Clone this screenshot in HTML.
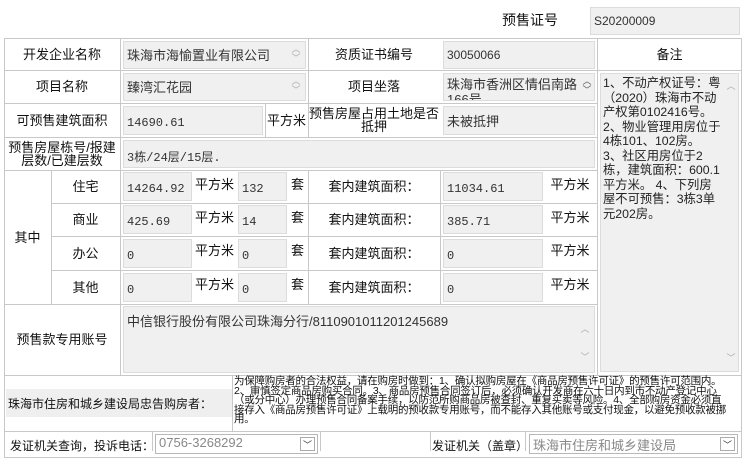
<!DOCTYPE html>
<html><head><meta charset="utf-8"><style>
body{margin:0;width:750px;height:450px;overflow:hidden;background:#fff;font-family:"Liberation Sans","Noto Sans CJK SC","WenQuanYi Zen Hei",sans-serif;font-size:13px;color:#111;position:relative}
div{position:absolute;box-sizing:border-box}
.h{background:#c8c8c8}
.v{background:#c8c8c8}
.in{background:#f0f0f0;border:1px solid #dcdcdc;color:#333;font-size:12px;padding-left:3px;display:flex;align-items:center}
.m{font-family:"Liberation Mono","Noto Sans CJK SC",monospace;padding-top:4px}
.lb{display:flex;align-items:center;justify-content:center;text-align:center;line-height:13px}
.sa{font-size:9px;color:#aaa;line-height:9px;text-align:center;width:10px}
</style></head><body>
<div class="lb" style="left:490px;top:8px;width:80px;height:24px;font-size:14px">预售证号</div>
<div class="in" style="left:590px;top:7px;width:150px;height:28px;font-family:'Liberation Sans',sans-serif">S20200009</div>

<div style="left:4px;top:38px;width:738px;height:420px;border:1px solid #c8c8c8"></div>
<div class="h" style="left:4px;top:70px;width:593px;height:1px"></div>
<div class="h" style="left:4px;top:103px;width:593px;height:1px"></div>
<div class="h" style="left:4px;top:137px;width:593px;height:1px"></div>
<div class="h" style="left:4px;top:170px;width:593px;height:1px"></div>
<div class="h" style="left:51px;top:203px;width:546px;height:1px"></div>
<div class="h" style="left:51px;top:236px;width:546px;height:1px"></div>
<div class="h" style="left:51px;top:270px;width:546px;height:1px"></div>
<div class="h" style="left:4px;top:304px;width:593px;height:1px"></div>
<div class="h" style="left:4px;top:375px;width:738px;height:1px"></div>
<div class="h" style="left:4px;top:431px;width:738px;height:1px"></div>
<div class="h" style="left:597px;top:70px;width:145px;height:1px"></div>
<div class="v" style="left:120px;top:38px;width:1px;height:337px"></div>
<div class="v" style="left:51px;top:170px;width:1px;height:134px"></div>
<div class="v" style="left:308px;top:38px;width:1px;height:99px"></div>
<div class="v" style="left:308px;top:170px;width:1px;height:134px"></div>
<div class="v" style="left:265px;top:103px;width:1px;height:34px"></div>
<div class="v" style="left:440px;top:170px;width:1px;height:134px"></div>
<div class="v" style="left:597px;top:38px;width:1px;height:337px"></div>
<div class="v" style="left:232px;top:375px;width:1px;height:56px"></div>
<div class="v" style="left:152px;top:431px;width:1px;height:20px"></div>
<div class="v" style="left:320px;top:431px;width:1px;height:20px"></div>
<div class="v" style="left:430px;top:431px;width:1px;height:20px"></div>
<div class="v" style="left:525px;top:431px;width:1px;height:20px"></div>

<div class="lb" style="left:4px;top:38px;width:116px;height:32px">开发企业名称</div>
<div class="in" style="left:123px;top:41px;width:183px;height:28px;font-size:13px;align-items:flex-start;padding-top:3px">珠海市海愉置业有限公司<div class="sa" style="right:4px;top:3px">︿<br>﹀</div></div>
<div class="lb" style="left:308px;top:38px;width:132px;height:32px">资质证书编号</div>
<div class="in" style="left:443px;top:41px;width:152px;height:28px">30050066</div>
<div class="lb" style="left:597px;top:38px;width:145px;height:32px">备注</div>
<div class="lb" style="left:4px;top:70px;width:116px;height:33px">项目名称</div>
<div class="in" style="left:123px;top:73px;width:183px;height:28px;font-size:13px;align-items:flex-start;padding-top:3px">臻湾汇花园<div class="sa" style="right:4px;top:3px">︿<br>﹀</div></div>
<div class="lb" style="left:308px;top:70px;width:132px;height:33px">项目坐落</div>
<div class="in" style="left:443px;top:73px;width:152px;height:28px;font-size:13px;align-items:flex-start;padding-top:3px;overflow:hidden;line-height:15px">珠海市香洲区情侣南路166号<div class="sa" style="right:2px;top:3px;color:#555">︿<br>﹀</div></div>
<div class="lb" style="left:4px;top:103px;width:116px;height:34px">可预售建筑面积</div>
<div class="in m" style="left:123px;top:106px;width:140px;height:29px">14690.61</div>
<div class="lb" style="left:265px;top:103px;width:43px;height:34px">平方米</div>
<div class="lb" style="left:308px;top:103px;width:132px;height:34px;line-height:13px">预售房屋占用土地是否<br>抵押</div>
<div class="in" style="left:443px;top:106px;width:152px;height:29px;font-size:13px">未被抵押</div>
<div class="lb" style="left:4px;top:137px;width:116px;height:33px;line-height:13px">预售房屋栋号/报建<br>层数/已建层数</div>
<div class="in m" style="left:123px;top:140px;width:472px;height:28px">3栋/24层/15层.</div>
<div style="left:600px;top:73px;width:139px;height:299px;background:#f0f0f0;border:1px solid #dcdcdc;font-size:12.3px;line-height:14.5px;padding:2px 16px 0 2px;color:#222">1、不动产权证号：粤（2020）珠海市不动产权第0102416号。2、物业管理用房位于4栋101、102房。 3、社区用房位于2栋，建筑面积：600.1平方米。 4、下列房屋不可预售：3栋3单元202房。<div class="sa" style="right:2px;top:8px">︿</div><div class="sa" style="right:2px;bottom:8px">﹀</div></div>
<div class="lb" style="left:4px;top:170px;width:47px;height:134px">其中</div>

<div class="lb" style="left:51px;top:170px;width:69px;height:33px">住宅</div>
<div class="in m" style="left:123px;top:172px;width:69px;height:29px">14264.92</div>
<div class="lb" style="left:192px;top:170px;width:45px;height:28px">平方米</div>
<div class="in m" style="left:238px;top:172px;width:49px;height:29px">132</div>
<div class="lb" style="left:287px;top:170px;width:21px;height:28px">套</div>
<div class="lb" style="left:308px;top:170px;width:132px;height:33px">套内建筑面积：</div>
<div class="in m" style="left:443px;top:172px;width:100px;height:29px">11034.61</div>
<div class="lb" style="left:543px;top:170px;width:54px;height:28px">平方米</div>

<div class="lb" style="left:51px;top:203px;width:69px;height:33px">商业</div>
<div class="in m" style="left:123px;top:205px;width:69px;height:29px">425.69</div>
<div class="lb" style="left:192px;top:203px;width:45px;height:28px">平方米</div>
<div class="in m" style="left:238px;top:205px;width:49px;height:29px">14</div>
<div class="lb" style="left:287px;top:203px;width:21px;height:28px">套</div>
<div class="lb" style="left:308px;top:203px;width:132px;height:33px">套内建筑面积：</div>
<div class="in m" style="left:443px;top:205px;width:100px;height:29px">385.71</div>
<div class="lb" style="left:543px;top:203px;width:54px;height:28px">平方米</div>

<div class="lb" style="left:51px;top:236px;width:69px;height:34px">办公</div>
<div class="in m" style="left:123px;top:239px;width:69px;height:29px">0</div>
<div class="lb" style="left:192px;top:236px;width:45px;height:28px">平方米</div>
<div class="in m" style="left:238px;top:239px;width:49px;height:29px">0</div>
<div class="lb" style="left:287px;top:236px;width:21px;height:28px">套</div>
<div class="lb" style="left:308px;top:236px;width:132px;height:34px">套内建筑面积：</div>
<div class="in m" style="left:443px;top:239px;width:100px;height:29px">0</div>
<div class="lb" style="left:543px;top:236px;width:54px;height:28px">平方米</div>

<div class="lb" style="left:51px;top:270px;width:69px;height:34px">其他</div>
<div class="in m" style="left:123px;top:273px;width:69px;height:29px">0</div>
<div class="lb" style="left:192px;top:270px;width:45px;height:28px">平方米</div>
<div class="in m" style="left:238px;top:273px;width:49px;height:29px">0</div>
<div class="lb" style="left:287px;top:270px;width:21px;height:28px">套</div>
<div class="lb" style="left:308px;top:270px;width:132px;height:34px">套内建筑面积：</div>
<div class="in m" style="left:443px;top:273px;width:100px;height:29px">0</div>
<div class="lb" style="left:543px;top:270px;width:54px;height:28px">平方米</div>
<div class="lb" style="left:4px;top:304px;width:116px;height:71px">预售款专用账号</div>
<div class="in" style="left:123px;top:306px;width:472px;height:67px;font-size:13px;align-items:flex-start;padding-top:4px">中信银行股份有限公司珠海分行/8110901011201245689<div class="sa" style="right:4px;top:18px">︿</div><div class="sa" style="right:4px;top:46px">﹀</div></div>
<div style="left:6px;top:389px;width:226px;height:28px;background:#efefef;font-size:12px;display:flex;align-items:center;padding-left:2px">珠海市住房和城乡建设局忠告购房者：</div>
<div style="left:233px;top:375px;width:508px;height:54px;font-size:10.5px;line-height:9.6px;letter-spacing:-0.25px;padding:2px 2px 0 1px;overflow:hidden;white-space:nowrap">为保障购房者的合法权益，请在购房时做到：1、确认拟购房屋在《商品房预售许可证》的预售许可范围内。<br>2、审慎签定商品房购买合同。3、商品房预售合同签订后，必须确认开发商在六十日内到市不动产登记中心<br>（或分中心）办理预售合同备案手续，以防范所购商品房被查封、重复买卖等风险。4、全部购房资金必须直<br>接存入《商品房预售许可证》上载明的预收款专用账号，而不能存入其他账号或支付现金，以避免预收款被挪<br>用。</div>
<div style="left:10px;top:437px;font-size:12px">发证机关查询，投诉电话：</div>
<div style="left:155px;top:434px;width:163px;height:20px;border:1px solid #b8b8b8;color:#888;font-size:13px;padding-left:3px">0756-3268292<div style="right:2px;top:2px;width:15px;height:14px;border:1px solid #aaa;font-size:9px;text-align:center;color:#333">﹀</div></div>
<div style="left:432px;top:437px;font-size:12px">发证机关（盖章）</div>
<div style="left:529px;top:434px;width:209px;height:20px;border:1px solid #b8b8b8;color:#888;font-size:13px;padding-left:3px">珠海市住房和城乡建设局<div style="right:2px;top:2px;width:15px;height:14px;border:1px solid #aaa;font-size:9px;text-align:center;color:#333">﹀</div></div>
</body></html>
